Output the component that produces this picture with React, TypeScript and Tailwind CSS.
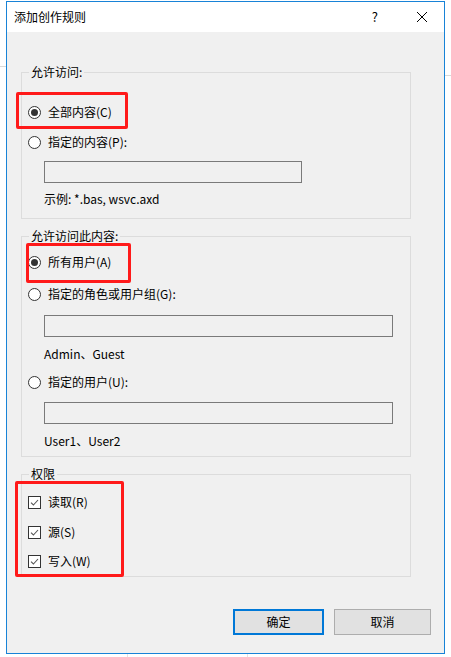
import type { ReactNode } from "react";

const font = {
  fontFamily: '"Noto Sans CJK SC", "Liberation Sans", sans-serif',
};

function Radio({ checked, label }: { checked?: boolean; label: string }) {
  return (
    <div className="flex h-[20px] items-center">
      <span className="ml-[6px] flex size-[13px] items-center justify-center rounded-full border border-[#333] bg-white">
        {checked && <span className="size-[7px] rounded-full bg-[#333]" />}
      </span>
      <span className="ml-[7px] text-[12px] leading-none text-black">{label}</span>
    </div>
  );
}

function Check({ label }: { label: string }) {
  return (
    <div className="flex h-[16px] items-center">
      <span className="ml-[6px] flex size-[13px] items-center justify-center border border-[#333] bg-white">
        <svg viewBox="0 0 11 11" className="size-[11px]">
          <path d="M2 5.6 L4.4 8 L9 3" fill="none" stroke="#555" strokeWidth="1.1" />
        </svg>
      </span>
      <span className="ml-[7px] text-[12px] leading-none text-black">{label}</span>
    </div>
  );
}

function Group({ title, children, pb }: { title: string; children: ReactNode; pb: string }) {
  return (
    <fieldset className={`ml-[14px] w-[390px] border border-[#dcdcdc] ${pb}`}>
      <legend className="ml-[7px] px-[2px] text-[12px] leading-[16px] text-black">{title}</legend>
      {children}
    </fieldset>
  );
}

function Field({ w, mt }: { w: string; mt: string }) {
  return <div className={`ml-[22px] h-[22px] border border-[#7a7a7a] bg-[#f0f0f0] ${w} ${mt}`} />;
}

export default function App() {
  return (
    <div className="relative h-[657px] w-[451px] overflow-hidden bg-white" style={font}>
      {/* background lines behind the dialog */}
      <div className="absolute top-[66px] left-0 h-px w-[6px] bg-[#d9d9d9]" />
      <div className="absolute top-[75px] right-0 h-px w-[6px] bg-[#d9d9d9]" />
      <div className="absolute bottom-0 left-[127px] h-[3px] w-px bg-[#e3e3e3]" />
      <div className="absolute bottom-0 left-[247px] h-[3px] w-px bg-[#e3e3e3]" />

      <div className="mt-[1px] ml-[6px] flex h-[653px] w-[439px] flex-col border border-[#1883d7] bg-[#f0f0f0]">
        <div className="flex h-[30px] items-center bg-white">
          <span className="ml-[7px] text-[12px] text-black">添加创作规则</span>
          <span className="ml-auto text-[13px] text-black">?</span>
          <svg viewBox="0 0 12 12" className="mr-[16px] ml-[38px] size-[12px]">
            <path d="M1 1 L11 11 M11 1 L1 11" stroke="#000" strokeWidth="1" />
          </svg>
        </div>

        <div className="flex flex-col pt-[32px]">
          <Group title="允许访问:" pb="pb-[11px]">
            <div className="mt-[22px]">
              <Radio checked label="全部内容(C)" />
            </div>
            <div className="mt-[10px]">
              <Radio label="指定的内容(P):" />
            </div>
            <Field w="w-[258px]" mt="mt-[9px]" />
            <div className="mt-[8px] ml-[22px] flex h-[16px] items-center text-[12px] text-black">
              示例: *.bas, wsvc.axd
            </div>
          </Group>

          <div className="mt-[9px]">
            <Group title="允许访问此内容:" pb="pb-[7px]">
              <div className="mt-[8px]">
                <Radio checked label="所有用户(A)" />
              </div>
              <div className="mt-[12px]">
                <Radio label="指定的角色或用户组(G):" />
              </div>
              <Field w="w-[349px]" mt="mt-[11px]" />
              <div className="mt-[9px] ml-[22px] flex h-[16px] items-center text-[12px] text-black">
                Admin、Guest
              </div>
              <div className="mt-[10px]">
                <Radio label="指定的用户(U):" />
              </div>
              <Field w="w-[349px]" mt="mt-[10px]" />
              <div className="mt-[9px] ml-[22px] flex h-[16px] items-center text-[12px] text-black">
                User1、User2
              </div>
            </Group>
          </div>

          <div className="mt-[9px]">
            <Group title="权限" pb="pb-[7px]">
              <div className="mt-[12px]">
                <Check label="读取(R)" />
              </div>
              <div className="mt-[14px]">
                <Check label="源(S)" />
              </div>
              <div className="mt-[13px]">
                <Check label="写入(W)" />
              </div>
            </Group>
          </div>

          <div className="mt-[32px] flex justify-end gap-[10px] pr-[13px]">
            <button className="h-[26px] w-[91px] border-2 border-[#0078d7] bg-[#e1e1e1] text-[12px] text-black">
              确定
            </button>
            <button className="h-[26px] w-[97px] border border-[#adadad] bg-[#e1e1e1] text-[12px] text-black">
              取消
            </button>
          </div>
        </div>
      </div>

      {/* red annotation boxes */}
      <div className="absolute top-[92px] left-[16px] h-[37px] w-[112px] rounded-[2px] border-[3px] border-[#ff1a1a]" />
      <div className="absolute top-[243px] left-[26px] h-[40px] w-[105px] rounded-[2px] border-[3px] border-[#ff1a1a]" />
      <div className="absolute top-[481px] left-[15px] h-[96px] w-[109px] rounded-[2px] border-[3px] border-[#ff1a1a]" />
    </div>
  );
}
